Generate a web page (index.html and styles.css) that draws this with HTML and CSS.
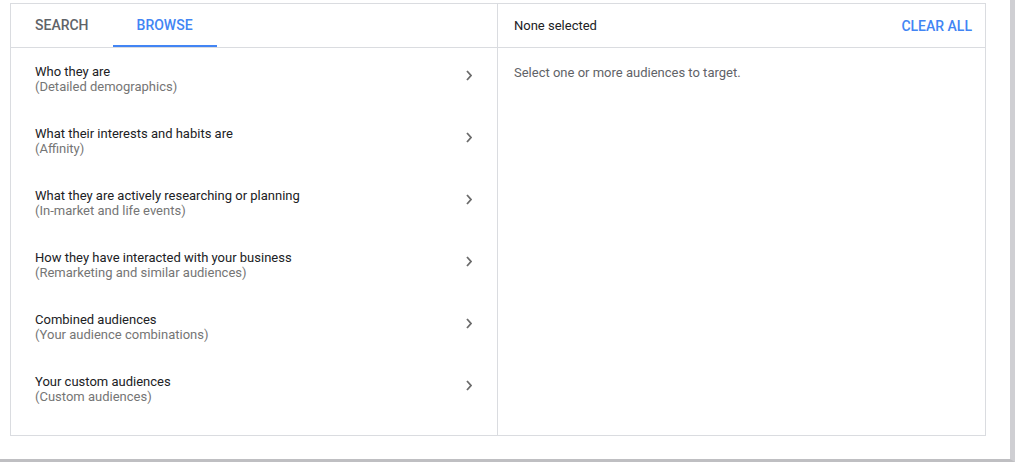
FILE: index.html
```html
<!DOCTYPE html>
<html lang="en">
<head>
  <meta charset="UTF-8">
  <meta name="viewport" content="width=device-width, initial-scale=1.0">
  <title>Audiences</title>
  <link rel="stylesheet" href="styles.css">
</head>
<body>
  <div class="frame">
    <div class="picker">
      <div class="panel panel-left">
        <div class="tabs">
          <div class="tab">Search</div>
          <div class="tab active">Browse</div>
        </div>
        <ul class="list">
          <li class="item">
            <div class="item-text">
              <div class="item-title">Who they are</div>
              <div class="item-sub">(Detailed demographics)</div>
            </div>
            <svg class="chevron" viewBox="0 0 6 11"><path d="M1 1l4 4.5L1 10" fill="none" stroke="#6b6b6b" stroke-width="1.8"/></svg>
          </li>
          <li class="item">
            <div class="item-text">
              <div class="item-title">What their interests and habits are</div>
              <div class="item-sub">(Affinity)</div>
            </div>
            <svg class="chevron" viewBox="0 0 6 11"><path d="M1 1l4 4.5L1 10" fill="none" stroke="#6b6b6b" stroke-width="1.8"/></svg>
          </li>
          <li class="item">
            <div class="item-text">
              <div class="item-title">What they are actively researching or planning</div>
              <div class="item-sub">(In-market and life events)</div>
            </div>
            <svg class="chevron" viewBox="0 0 6 11"><path d="M1 1l4 4.5L1 10" fill="none" stroke="#6b6b6b" stroke-width="1.8"/></svg>
          </li>
          <li class="item">
            <div class="item-text">
              <div class="item-title">How they have interacted with your business</div>
              <div class="item-sub">(Remarketing and similar audiences)</div>
            </div>
            <svg class="chevron" viewBox="0 0 6 11"><path d="M1 1l4 4.5L1 10" fill="none" stroke="#6b6b6b" stroke-width="1.8"/></svg>
          </li>
          <li class="item">
            <div class="item-text">
              <div class="item-title">Combined audiences</div>
              <div class="item-sub">(Your audience combinations)</div>
            </div>
            <svg class="chevron" viewBox="0 0 6 11"><path d="M1 1l4 4.5L1 10" fill="none" stroke="#6b6b6b" stroke-width="1.8"/></svg>
          </li>
          <li class="item">
            <div class="item-text">
              <div class="item-title">Your custom audiences</div>
              <div class="item-sub">(Custom audiences)</div>
            </div>
            <svg class="chevron" viewBox="0 0 6 11"><path d="M1 1l4 4.5L1 10" fill="none" stroke="#6b6b6b" stroke-width="1.8"/></svg>
          </li>
        </ul>
      </div>
      <div class="panel panel-right">
        <div class="selected-head">
          <span class="selected-count">None selected</span>
          <span class="clear-all">Clear all</span>
        </div>
        <p class="hint">Select one or more audiences to target.</p>
      </div>
    </div>
  </div>
</body>
</html>
```

FILE: styles.css
```css
/* Base styles */
body, html {
  margin: 0;
  padding: 0;
  font-family: Roboto, "Liberation Sans", Arial, sans-serif;
  background-color: #fff;
  color: #202124;
}

/* Page frame */
.frame {
  width: 1015px;
  height: 462px;
  box-sizing: border-box;
  padding: 3px 0 0 10px;
  border-right: 5px solid #cfcfd3;
  border-bottom: 3px solid #bfbfc2;
}

/* Picker box */
.picker {
  display: flex;
  width: 976px;
  height: 433px;
  box-sizing: border-box;
  border: 1px solid #dadce0;
}

.panel-left {
  width: 486px;
  border-right: 1px solid #dadce0;
}

.panel-right {
  flex: 1;
}

/* Tabs */
.tabs {
  display: flex;
  height: 43px;
  border-bottom: 1px solid #dadce0;
}

.tab {
  padding: 0 24px;
  line-height: 43px;
  font-size: 14px;
  font-weight: 500;
  text-transform: uppercase;
  color: #5f6368;
  box-sizing: border-box;
}

.tab.active {
  color: #4285f4;
  border-bottom: 2px solid #4285f4;
  height: 43px;
}

/* Category list */
.list {
  list-style: none;
  margin: 0;
  padding: 0;
}

.item {
  display: flex;
  align-items: flex-start;
  height: 62px;
  box-sizing: border-box;
  padding: 16px 0 0 24px;
  font-size: 13px;
  line-height: 15px;
}

.item-text {
  flex: 1;
}

.item-title {
  color: #202124;
}

.item-sub {
  color: #757575;
}

.chevron {
  width: 6px;
  height: 11px;
  margin: 6px 25px 0 0;
}

/* Selection side */
.selected-head {
  display: flex;
  justify-content: space-between;
  align-items: center;
  height: 43px;
  padding: 0 13px 0 16px;
  border-bottom: 1px solid #dadce0;
  font-size: 13px;
}

.clear-all {
  color: #4285f4;
  font-size: 14px;
  font-weight: 500;
  text-transform: uppercase;
}

.hint {
  margin: 0;
  padding: 17px 16px 0;
  font-size: 13px;
  line-height: 15px;
  color: #5f6368;
}
```
